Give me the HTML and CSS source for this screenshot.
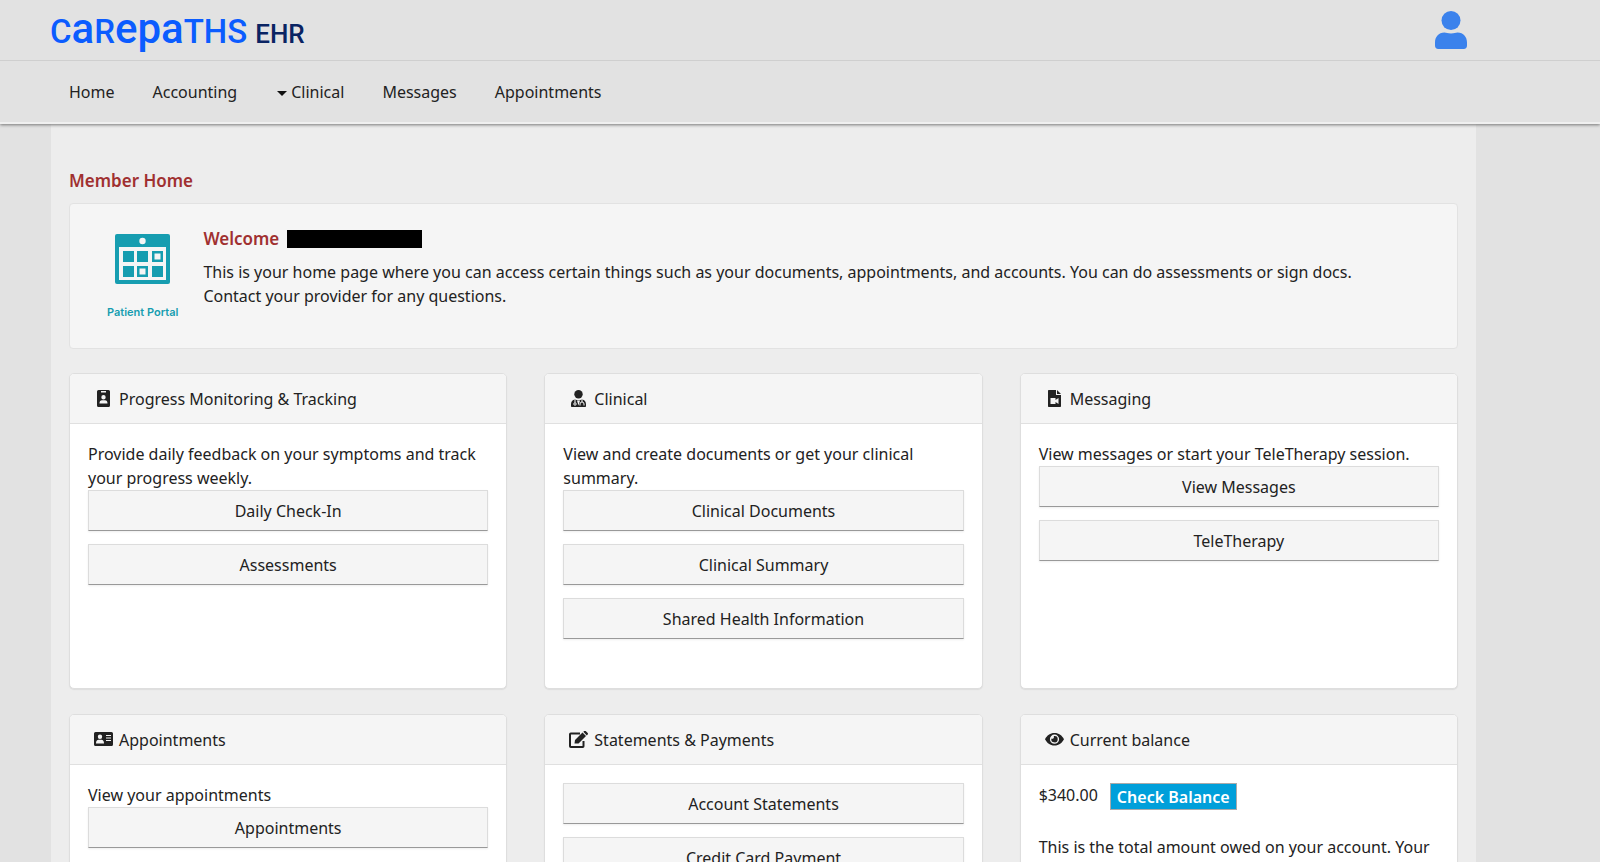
FILE: index.html
```html
<!DOCTYPE html>
<html lang="en">
<head>
<meta charset="utf-8">
<title>CarePaths EHR - Member Home</title>
<link rel="stylesheet" href="styles.css">
</head>
<body>
<header class="site-header">
  <div class="brand-bar">
    <a class="logo" href="#"><span class="logo-name">C<span class="tall">a</span>R<span class="tall">epa</span>THS</span><span class="logo-suffix">EHR</span></a>
    <button class="profile" type="button" aria-label="Profile">
      <svg viewBox="0 0 34 38" width="34" height="38" fill="#3b82ec"><circle cx="17" cy="9.500" r="9.500"/><path d="M10.500 21.500c2 0 3 1 6.500 1s4.500-1 6.500-1C29.500 21.500 33 26 33 31.500v3c0 2-1.200 3.500-3.200 3.500H4.200C2.200 38 1 36.500 1 34.500v-3C1 26 4.500 21.500 10.500 21.500z"/></svg>
    </button>
  </div>
  <nav class="main-nav">
    <a href="#">Home</a>
    <a href="#">Accounting</a>
    <a href="#"><span class="caret"></span>Clinical</a>
    <a href="#">Messages</a>
    <a href="#">Appointments</a>
  </nav>
</header>
<main class="page">
  <h1 class="title">Member Home</h1>
  <section class="welcome">
    <div class="portal">
      <svg viewBox="0 0 55 50" width="55" height="50">
        <rect width="55" height="50" rx="2" fill="#169db0"/>
        <circle cx="27.500" cy="7" r="3.200" fill="#f5f5f5"/>
        <path fill="#f5f5f5" d="M4 13h47v33H4z"/>
        <path fill="#169db0" fill-rule="evenodd" d="M8 17h11v11H8zM22 17h11v11H22zM37 17h11v11H37zM8 32h11v11H8zM22 32h11v11H22zM37 32h11v11H37zM39.500 19.500v6h6v-6zM24.500 34.500v6h6v-6z"/>
      </svg>
      <span class="portal-label">Patient Portal</span>
    </div>
    <div class="welcome-text">
      <h2 class="title welcome-title">Welcome <span class="redacted"></span></h2>
      <p>This is your home page where you can access certain things such as your documents, appointments, and accounts. You can do assessments or sign docs. Contact your provider for any questions.</p>
    </div>
  </section>
  <div class="cards">
    <section class="card">
      <h3 class="card-head">
        <svg class="icon" viewBox="0 0 19 17"><path fill-rule="evenodd" d="M4.500 0h10A1.500 1.500 0 0 1 16 1.500v14a1.500 1.500 0 0 1-1.500 1.500h-10A1.500 1.500 0 0 1 3 15.500v-14A1.500 1.500 0 0 1 4.500 0zM7 1v1.500h5V1zM9.500 5a2.200 2.200 0 1 0 0 4.400 2.200 2.200 0 0 0 0-4.400zM5.500 13.500h8c0-2.300-1-3.300-2.500-3.300H8c-1.500 0-2.500 1-2.500 3.300z"/></svg>
        Progress Monitoring &amp; Tracking</h3>
      <div class="card-body">
        <p>Provide daily feedback on your symptoms and track your progress weekly.</p>
        <div class="actions"><button type="button">Daily Check-In</button><button type="button">Assessments</button></div>
      </div>
    </section>
    <section class="card">
      <h3 class="card-head">
        <svg class="icon" viewBox="0 0 19 17"><circle cx="9.500" cy="4.200" r="4.200"/><path d="M6 9.500c2 1 5 1 7 0 2.600.4 4 2.300 4 4.700V16c0 .6-.4 1-1 1H3c-.6 0-1-.4-1-1v-1.800c0-2.400 1.400-4.300 4-4.700z"/><path d="M6 9.500v3.300M13 9.500v2.500M11 15.500V14a2 2 0 0 1 4 0v1.500" fill="none" stroke="#f5f5f5"/><circle cx="6" cy="14" r="1.200" fill="none" stroke="#f5f5f5"/><path d="m8 10.500 1.500 5 1.500-5z" fill="#f5f5f5"/></svg>
        Clinical</h3>
      <div class="card-body">
        <p>View and create documents or get your clinical summary.</p>
        <div class="actions"><button type="button">Clinical Documents</button><button type="button">Clinical Summary</button><button type="button">Shared Health Information</button></div>
      </div>
    </section>
    <section class="card">
      <h3 class="card-head">
        <svg class="icon" viewBox="0 0 19 17"><path fill-rule="evenodd" d="M4 0h7v5h5v11c0 .6-.4 1-1 1H4c-.6 0-1-.4-1-1V1c0-.6.400-1 1-1zM12 0l4 4h-4zM5.500 8v6h5v-2l3 2V8l-3 2V8z"/></svg>
        Messaging</h3>
      <div class="card-body">
        <p>View messages or start your TeleTherapy session.</p>
        <div class="actions"><button type="button">View Messages</button><button type="button">TeleTherapy</button></div>
      </div>
    </section>
    <section class="card">
      <h3 class="card-head">
        <svg class="icon" viewBox="0 0 19 17"><path fill-rule="evenodd" d="M1.500 1h16A1.500 1.500 0 0 1 19 2.500v11a1.500 1.500 0 0 1-1.500 1.500h-16A1.500 1.500 0 0 1 0 13.500v-11A1.500 1.500 0 0 1 1.500 1zM6 3.500a2.200 2.200 0 1 0 0 4.400 2.200 2.200 0 0 0 0-4.400zM2 12.500h8C10 10 9 8.800 7.500 8.800h-3C3 8.800 2 10 2 12.500zM12 4v1h5V4zM12 6.500v1h5v-1zM12 9v1h5V9z"/></svg>
        Appointments</h3>
      <div class="card-body">
        <p>View your appointments</p>
        <div class="actions"><button type="button">Appointments</button></div>
      </div>
    </section>
    <section class="card">
      <h3 class="card-head">
        <svg class="icon" viewBox="0 0 19 17"><path d="M11 2.500H1.800a.8.800 0 0 0-.8.800v12c0 .4.400.7.800.7h12c.4 0 .7-.3.700-.7V10" fill="none" stroke="currentColor" stroke-width="2"/><path d="M5.500 12.500 6 9l7.500-7.500 3.500 3.500-7.500 7.500zM14.300.700l1-.700c.5-.4 1-.3 1.400.1l2 2c.4.400.4 1 0 1.400l-.9.900z"/></svg>
        Statements &amp; Payments</h3>
      <div class="card-body">
        <div class="actions"><button type="button">Account Statements</button><button type="button">Credit Card Payment</button></div>
      </div>
    </section>
    <section class="card">
      <h3 class="card-head">
        <svg class="icon" viewBox="0 0 19 17"><path fill-rule="evenodd" d="M9.500 2C14 2 17 4.500 19 8.200 17 12 14 14.500 9.500 14.500S2 12 0 8.200C2 4.500 5 2 9.500 2zm0 1.600a4.600 4.600 0 1 0 0 9.200 4.600 4.600 0 0 0 0-9.200z"/><path d="M9.500 5a3.200 3.200 0 1 1-3.100 2.500 1.700 1.700 0 0 0 2.300-2.400c.3-.1.500-.1.800-.1z"/></svg>
        Current balance</h3>
      <div class="card-body">
        <div class="balance"><span>$340.00</span><button type="button" class="check">Check Balance</button></div>
        <p>This is the total amount owed on your account. Your</p>
      </div>
    </section>
  </div>
</main>
</body>
</html>
```
FILE: styles.css
```css
* { box-sizing: border-box; }
html { height: 100%; overflow: hidden; }
body {
  margin: 0;
  height: 100%;
  display: flex;
  flex-direction: column;
  overflow: hidden;
  background: #e2e2e2;
  color: #222;
  font: 16px/24px "Noto Sans", sans-serif;
}
h1, h2, h3, p { margin: 0; font-weight: 400; font-size: 16px; }
button { font: inherit; color: inherit; cursor: pointer; }

.site-header {
  flex: none;
  z-index: 1;
  background: #e2e2e2;
  border-bottom: 2px solid #f0f0f0;
  box-shadow: 0 1px 3px #777;
}
.brand-bar {
  display: flex;
  justify-content: space-between;
  height: 61px;
  padding: 0 132px 1px 50px;
  border-bottom: 1px solid #cfcfcf;
}
.logo {
  display: flex;
  align-items: baseline;
  gap: 8px;
  text-decoration: none;
}
.logo-name { font: 500 33px/58px Roboto, sans-serif; color: #0b5cff; }
.tall { font-size: 42px; }
.logo-suffix { font: 500 26px/58px Roboto, sans-serif; color: #0a2463; }
.profile { display: flex; align-items: center; padding: 0; border: 0; background: none; }

.main-nav { display: flex; gap: 38px; padding: 19px 69px 18px; }
.main-nav a { display: flex; align-items: center; color: #222; text-decoration: none; }
.caret { margin: 2px 4px 0 2px; border: 5px solid transparent; border-top-color: #111; border-bottom: 0; }

.page {
  flex: 1;
  min-height: 0;
  overflow: hidden;
  margin: 0 124px 0 51px;
  padding: 45px 18px 0;
  background: #ededed;
}
.title { color: #a03030; font-size: 17px; font-weight: 600; }
.welcome {
  display: flex;
  gap: 25px;
  margin: 10px 0 24px;
  padding: 23px 70px 23px 37px;
  min-height: 146px;
  background: #f5f5f5;
  border: 1px solid #e2e2e2;
  border-radius: 4px;
}
.portal { display: flex; flex: none; flex-direction: column; align-items: center; gap: 16px; padding-top: 7px; }
.portal-label { font: 600 11px/24px Inter, sans-serif; color: #169db0; }
.welcome-title { display: flex; align-items: center; gap: 8px; margin-bottom: 9px; }
.redacted { width: 135px; height: 18px; background: #000; }

.cards { display: grid; grid-template-columns: repeat(3, 1fr); gap: 25px 37px; }
.card {
  min-height: 316px;
  background: #fff;
  border: 1px solid #dedede;
  border-radius: 5px;
  box-shadow: 0 1px 1px #ddd;
  overflow: hidden;
}
.card-head {
  display: flex;
  align-items: center;
  gap: 6px;
  height: 50px;
  padding: 0 24px;
  background: #f5f5f5;
  border-bottom: 1px solid #e0e0e0;
}
.icon { flex: none; width: 19px; height: 17px; fill: #222; }
.card-body { padding: 18px 18px; }
.actions { display: grid; gap: 13px; }
.actions button {
  height: 41px;
  padding: 0;
  background: #f5f5f5;
  border: 1px solid #dcdcdc;
  border-bottom-color: #999;
  border-radius: 0;
  box-shadow: 0 1px 2px #eee;
}
.balance { display: flex; gap: 12px; margin-bottom: 25px; }
.check {
  height: 27px;
  padding: 0 6px;
  color: #fff;
  font-weight: 600;
  line-height: 24px;
  background: #009fda;
  border: 1px solid #aaa;
}
```
